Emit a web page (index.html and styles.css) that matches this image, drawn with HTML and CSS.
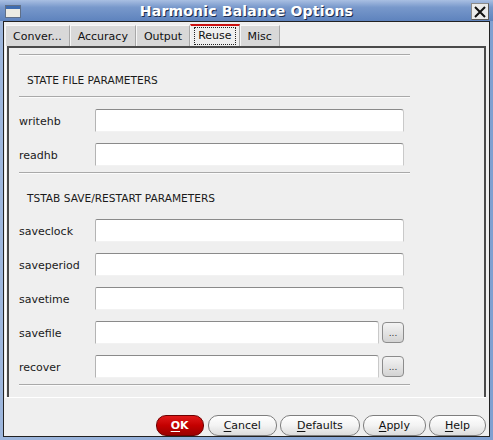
FILE: index.html
```html
<!DOCTYPE html>
<html>
<head>
<meta charset="utf-8">
<link rel="stylesheet" href="styles.css">
</head>
<body>
<div class="window">
  <div class="titlebar">
    <svg class="ticon" width="16" height="13" viewBox="0 0 16 13">
      <rect x="0.5" y="0.5" width="15" height="12" fill="#ecebe3" stroke="#5f6f88"/>
      <rect x="1" y="1" width="14" height="3" fill="#3f6cb0"/>
    </svg>
    <div class="title">Harmonic Balance Options</div>
    <div class="close">
      <svg width="16" height="16" viewBox="0 0 16 16">
        <path d="M3 3 L13 13 M13 3 L3 13" stroke="#111" stroke-width="2" fill="none"/>
      </svg>
    </div>
  </div>
  <div class="client">
    <div class="tabs">
      <div class="tab">Conver...</div>
      <div class="tab">Accuracy</div>
      <div class="tab">Output</div>
      <div class="tab selected"><span class="focus">Reuse</span></div>
      <div class="tab">Misc</div>
    </div>
    <div class="panel-wrap">
      <div class="panel">
        <div class="form">
          <div class="sep"></div>
          <div class="section-title">STATE FILE PARAMETERS</div>
          <div class="sep"></div>
          <div class="rows rows-first">
            <div class="row"><span class="label">writehb</span><div class="field"></div></div>
            <div class="row"><span class="label">readhb</span><div class="field"></div></div>
          </div>
          <div class="sep sep-after"></div>
          <div class="section-title">TSTAB SAVE/RESTART PARAMETERS</div>
          <div class="rows rows-second">
            <div class="row"><span class="label">saveclock</span><div class="field"></div></div>
            <div class="row"><span class="label">saveperiod</span><div class="field"></div></div>
            <div class="row"><span class="label">savetime</span><div class="field"></div></div>
            <div class="row"><span class="label">savefile</span><div class="field-browse"><div class="field"></div><button class="browse">...</button></div></div>
            <div class="row"><span class="label">recover</span><div class="field-browse"><div class="field"></div><button class="browse">...</button></div></div>
          </div>
          <div class="sep sep-after"></div>
        </div>
      </div>
    </div>
    <div class="buttons">
      <button class="btn btn-ok"><u>O</u>K</button>
      <button class="btn"><u>C</u>ancel</button>
      <button class="btn btn-wide"><u>D</u>efaults</button>
      <button class="btn"><u>A</u>pply</button>
      <button class="btn"><u>H</u>elp</button>
    </div>
  </div>
</div>
</body>
</html>
```
FILE: styles.css
```css
* { box-sizing: border-box; }
html, body { margin: 0; padding: 0; }
body {
  width: 493px;
  height: 440px;
  overflow: hidden;
  font-family: "DejaVu Sans", sans-serif;
  font-size: 11px;
  color: #1a1a1a;
}
.window {
  width: 493px;
  height: 440px;
  display: flex;
  flex-direction: column;
  background: linear-gradient(90deg, #9db6dc, #7f9fd0);
}
.titlebar {
  height: 21px;
  flex: none;
  display: flex;
  align-items: center;
  position: relative;
  background: linear-gradient(180deg, #a9bfe2 0%, #7898cb 35%, #5e83bd 100%);
}
.ticon {
  position: absolute;
  left: 5px;
  top: 5px;
}
.title {
  flex: 1;
  text-align: center;
  font-weight: bold;
  font-size: 14px;
  color: #fff;
  text-shadow: 1px 1px 0 #1c2c4c;
  letter-spacing: 0.2px;
  padding-top: 1px;
}
.close {
  position: absolute;
  left: 471px;
  top: 3px;
  width: 18px;
  height: 17px;
  background: #ebebeb;
  border: 1px solid #8a8a8a;
  border-right-color: #5a5a5a;
  border-bottom-color: #5a5a5a;
  display: flex;
  align-items: center;
  justify-content: center;
}
.client {
  flex: 1;
  margin: 0 3px 3px 3px;
  border: 1px solid #222;
  background: #efefef;
  display: flex;
  flex-direction: column;
  padding: 2px 3px 0 1px;
}
.tabs {
  height: 22px;
  flex: none;
  display: flex;
  align-items: flex-end;
}
.tab {
  height: 21px;
  padding: 0 7px;
  display: flex;
  align-items: center;
  background: #d8d8d8;
  border: 1px solid #f6f6f6;
  border-right-color: #a8a8a8;
  border-bottom: 0;
  color: #111;
  padding-top: 1px;
}
.tab.selected {
  height: 22px;
  background: #efefef;
  border-top: 2px solid #cc1010;
  padding: 0 3px;
}
.focus {
  border: 1px dotted #222;
  padding: 1px 3px 2px;
}
.panel-wrap {
  height: 352px;
  flex: none;
  border-left: 1px solid #fff;
  border-bottom: 1px solid #fff;
  padding-left: 1px;
  display: flex;
}
.panel {
  flex: 1;
  border: 2px solid #4a4a4a;
  border-bottom: 0;
  padding: 6px 0 0 10px;
}
.form {
  width: 391px;
}
.sep {
  height: 2px;
  border-top: 1px solid #a9a9a9;
  border-bottom: 1px solid #fbfbfb;
}
.section-title {
  height: 40px;
  padding: 8px 0 0 8px;
  display: flex;
  align-items: center;
  font-size: 10.6px;
  color: #1a1a1a;
}
.rows {
  display: flex;
  flex-direction: column;
  gap: 11px;
}
.rows-first { margin-top: 11px; }
.rows-second { margin-top: 5px; }
.sep-after { margin-top: 6px; }
.row {
  height: 23px;
  display: grid;
  grid-template-columns: 76px 309px;
  align-items: center;
}
.label {
  padding-top: 1px;
}
.field {
  height: 23px;
  background: #fff;
  border-top: 1px solid #8a8a8a;
  border-left: 1px solid #b4b4b4;
  border-right: 1px solid #c9c9c9;
  border-bottom: 1px solid #f2f2f2;
  border-radius: 2px 3px 0 0;
}
.field-browse {
  display: grid;
  grid-template-columns: 284px 22px;
  gap: 3px;
  align-items: center;
}
.browse {
  height: 21px;
  width: 22px;
  padding: 0 0 4px;
  font-family: "DejaVu Sans", sans-serif;
  font-size: 9px;
  color: #333;
  background: linear-gradient(180deg, #f4f4f4, #d3d3d3);
  border: 1px solid #8c8c8c;
  border-radius: 4px;
  display: flex;
  align-items: flex-end;
  justify-content: center;
}
.buttons {
  height: 38px;
  flex: none;
  padding-top: 17px;
  display: flex;
  justify-content: flex-end;
  gap: 3px;
}
.btn {
  height: 21px;
  padding: 0 15px;
  font-family: "DejaVu Sans", sans-serif;
  font-size: 11px;
  color: #111;
  background: linear-gradient(180deg, #ffffff 0%, #f3f3f3 50%, #dcdcdc 100%);
  border: 1px solid #7e7e7e;
  border-radius: 10px;
}
.btn-wide { padding: 0 16px; }
.btn-ok {
  width: 48px;
  padding: 0;
  font-weight: bold;
  color: #fff;
  background: linear-gradient(180deg, #e01a1a 0%, #c40000 50%, #9a0000 100%);
  border-color: #6e0000;
  margin-right: 1px;
}
.btn u { text-decoration-thickness: 1px; text-underline-offset: 2px; }
```
